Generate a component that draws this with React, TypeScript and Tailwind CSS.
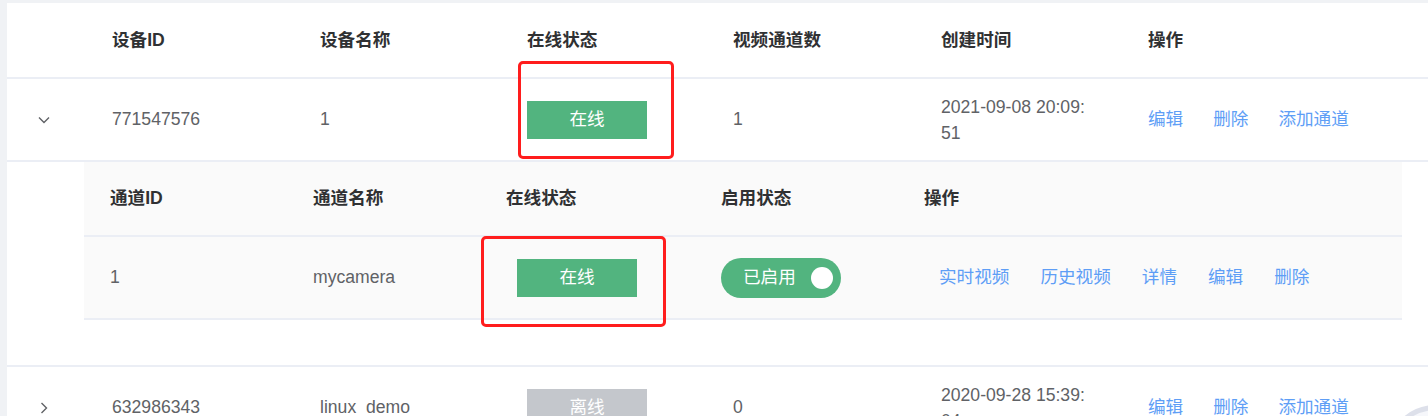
import React from "react";

const link = "text-[#5e9ef6]";

function ChevronDown() {
  return (
    <svg width="14" height="14" viewBox="0 0 14 14" fill="none" stroke="#606266" strokeWidth="1.4">
      <path d="M2 4.5 L7 9.5 L12 4.5" />
    </svg>
  );
}

function ChevronRight() {
  return (
    <svg width="14" height="14" viewBox="0 0 14 14" fill="none" stroke="#606266" strokeWidth="1.4">
      <path d="M4.5 2 L9.5 7 L4.5 12" />
    </svg>
  );
}

function Badge({ online }: { online: boolean }) {
  return (
    <div
      className={
        "flex h-[38px] w-[120px] items-center justify-center text-white " +
        (online ? "bg-[#52b47f]" : "bg-[#c4c7cc]")
      }
    >
      {online ? "在线" : "离线"}
    </div>
  );
}

function DeviceRow({
  open,
  id,
  name,
  online,
  channels,
  created,
}: {
  open: boolean;
  id: string;
  name: string;
  online: boolean;
  channels: string;
  created: [string, string];
}) {
  return (
    <div className="flex h-[83px] shrink-0 items-center border-b-2 border-[#ebeef5] text-[#606266]">
      <div className="flex w-[93px] pl-[30px]">{open ? <ChevronDown /> : <ChevronRight />}</div>
      <div className="w-[208px] pl-[12px]">{id}</div>
      <div className="w-[207px] pl-[12px]">{name}</div>
      <div className="w-[206px] pl-[12px]">
        <Badge online={online} />
      </div>
      <div className="w-[208px] pl-[12px]">{channels}</div>
      <div className="w-[207px] pl-[12px] leading-[26px]">
        <div>{created[0]}</div>
        <div>{created[1]}</div>
      </div>
      <div className="flex flex-1 gap-[30px] pl-[12px]">
        <span className={link}>编辑</span>
        <span className={link}>删除</span>
        <span className={link}>添加通道</span>
      </div>
    </div>
  );
}

function ChannelTable() {
  return (
    <div className="flex h-[205px] shrink-0 flex-col border-b-2 border-[#ebeef5]">
      <div className="ml-[77px] mr-[26px] bg-[#fafafa]">
        <div className="flex h-[75px] items-center border-b-2 border-[#ebeef5] pl-[14px] font-bold text-[#303133]">
          <div className="w-[203px] pl-[12px]">通道ID</div>
          <div className="w-[193px] pl-[12px]">通道名称</div>
          <div className="w-[215px] pl-[12px]">在线状态</div>
          <div className="w-[203px] pl-[12px]">启用状态</div>
          <div className="flex-1 pl-[12px]">操作</div>
        </div>
        <div className="flex h-[83px] items-center border-b-2 border-[#ebeef5] pl-[14px] text-[#606266]">
          <div className="w-[203px] pl-[12px]">1</div>
          <div className="w-[193px] pl-[12px]">mycamera</div>
          <div className="w-[215px] pl-[23px]">
            <Badge online />
          </div>
          <div className="w-[203px] pl-[12px]">
            <div className="flex h-[40px] w-[120px] items-center justify-between rounded-full bg-[#52b47f] pl-[22px] pr-[8px] text-white">
              <span>已启用</span>
              <span className="h-[22px] w-[22px] rounded-full bg-white" />
            </div>
          </div>
          <div className="flex flex-1 gap-[31px] pl-[27px]">
            <span className={link}>实时视频</span>
            <span className={link}>历史视频</span>
            <span className={link}>详情</span>
            <span className={link}>编辑</span>
            <span className={link}>删除</span>
          </div>
        </div>
      </div>
    </div>
  );
}

export default function App() {
  return (
    <div className="relative h-[416px] w-[1428px] overflow-hidden bg-[#f0f2f5] pl-[7px] pt-[3px] font-['Liberation_Sans','Noto_Sans_CJK_SC',sans-serif] text-[17.6px]">
      <div className="flex h-full flex-col bg-white">
        <div className="flex h-[76px] shrink-0 items-center border-b-2 border-[#ebeef5] font-bold text-[#303133]">
          <div className="w-[93px]" />
          <div className="w-[208px] pl-[12px]">设备ID</div>
          <div className="w-[207px] pl-[12px]">设备名称</div>
          <div className="w-[206px] pl-[12px]">在线状态</div>
          <div className="w-[208px] pl-[12px]">视频通道数</div>
          <div className="w-[207px] pl-[12px]">创建时间</div>
          <div className="flex-1 pl-[12px]">操作</div>
        </div>
        <DeviceRow open id="771547576" name="1" online channels="1" created={["2021-09-08 20:09:", "51"]} />
        <ChannelTable />
        <DeviceRow
          open={false}
          id="632986343"
          name="linux_demo"
          online={false}
          channels="0"
          created={["2020-09-28 15:39:", "04"]}
        />
      </div>

      {/* annotation boxes */}
      <div className="absolute left-[518px] top-[61px] h-[98px] w-[156px] rounded-[5px] border-[3.5px] border-[#ff1d1d]" />
      <div className="absolute left-[481px] top-[236px] h-[91px] w-[185px] rounded-[5px] border-[3.5px] border-[#ff1d1d]" />

      {/* floating button peeking in the corner */}
      <div className="absolute left-[1386px] top-[405px] h-[100px] w-[100px] rounded-full border-[5px] border-[#dde0ea] bg-[#f6f7fb]" />
    </div>
  );
}
